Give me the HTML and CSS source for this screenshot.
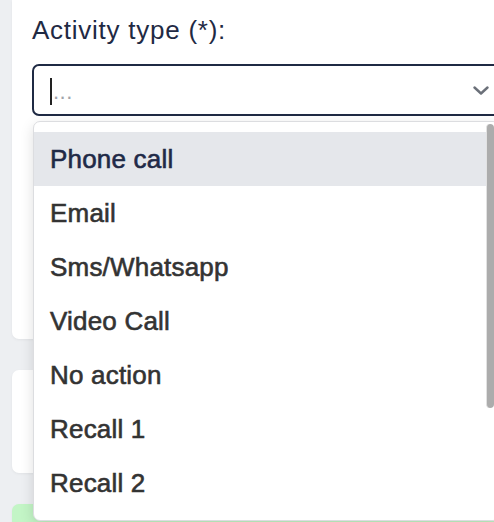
FILE: index.html
```html
<!DOCTYPE html>
<html lang="en">
<head>
  <meta charset="UTF-8" />
  <meta name="viewport" content="width=device-width, initial-scale=1.0"/>
  <title>Activity</title>
  <link rel="stylesheet" href="styles.css">
</head>
<body>

  <div class="page">
    <section class="card card-form">
      <label class="field-label" for="activity-type">Activity type (*):</label>
      <div class="select">
        <div class="select-input" id="activity-type">
          <span class="caret"></span><span class="placeholder">...</span>
        </div>
        <svg class="chevron" width="16" height="9" viewBox="0 0 16 9">
          <path d="M1.5 1.5 L8 7.5 L14.5 1.5" fill="none" stroke="#6b7079" stroke-width="2.4" stroke-linecap="round" stroke-linejoin="round"/>
        </svg>
      </div>
    </section>

    <section class="card card-short"></section>
    <section class="card card-green"></section>

    <!-- open options of the select -->
    <div class="dropdown">
      <ul class="options">
        <li class="option active">Phone call</li>
        <li class="option">Email</li>
        <li class="option">Sms/Whatsapp</li>
        <li class="option">Video Call</li>
        <li class="option">No action</li>
        <li class="option">Recall 1</li>
        <li class="option">Recall 2</li>
      </ul>
      <div class="scroll-thumb"></div>
    </div>
  </div>

</body>
</html>
```

FILE: styles.css
```css
body {
  margin: 0;
  font-family: 'Liberation Sans', Arial, sans-serif;
  background: #edeff2;
  color: #333;
}
.page {
  position: relative;
  width: 494px;
  height: 522px;
  overflow: hidden;
  padding-left: 12px;
  box-sizing: border-box;
}
.card {
  width: 520px;
  background-color: #fff;
  border-radius: 7px;
  box-shadow: 0 1px 3px rgba(0, 0, 0, 0.05);
  box-sizing: border-box;
}
.card-form {
  height: 339px;
  border-radius: 0 0 7px 7px;
  padding: 14px 20px 0 20px;
}
.card-short {
  margin-top: 31px;
  height: 103px;
}
.card-green {
  margin-top: 31px;
  height: 60px;
  background-color: #c3f5c6;
}
.field-label {
  display: block;
  font-size: 26px;
  line-height: 32px;
  letter-spacing: 0.75px;
  color: #1f2a44;
}
.select {
  position: relative;
  margin-top: 18px;
  width: 468px;
}
.select-input {
  display: flex;
  align-items: flex-end;
  height: 52px;
  padding: 0 16px 9px 16px;
  border: 2px solid #1f2a44;
  border-radius: 7px;
  box-sizing: border-box;
}
.caret {
  width: 2px;
  height: 27px;
  background-color: #222;
}
.placeholder {
  font-size: 22px;
  line-height: 22px;
  color: #a0a4aa;
  letter-spacing: 0.5px;
  margin-left: 1px;
  margin-bottom: 2px;
}
.chevron {
  position: absolute;
  right: 11px;
  top: 22px;
}
.dropdown {
  position: absolute;
  top: 121px;
  left: 33px;
  width: 467px;
  background-color: #fff;
  border: 1px solid #dcdde0;
  border-radius: 7px;
  box-shadow: 0 4px 14px rgba(0, 0, 0, 0.13);
  padding: 10px 13px 10px 0;
  box-sizing: border-box;
}
.options {
  list-style: none;
  margin: 0;
  padding: 0;
}
.option {
  height: 54px;
  display: flex;
  align-items: center;
  padding-left: 16px;
  font-size: 26px;
  letter-spacing: 0.2px;
  -webkit-text-stroke: 0.6px currentColor;
  color: #333;
}
.option.active {
  background-color: #e5e7eb;
  color: #1f2a47;
}
.scroll-thumb {
  position: absolute;
  top: 2px;
  right: 5px;
  width: 7px;
  height: 284px;
  background-color: #acacac;
  border-left: 1px solid #e2e2e2;
  border-radius: 4px;
}
```
